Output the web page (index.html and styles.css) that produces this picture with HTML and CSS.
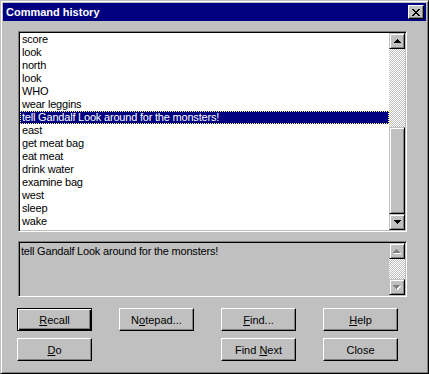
FILE: index.html
```html
<!doctype html>
<html lang="en">
  <head>
    <meta charset="UTF-8" />
    <title>Command history</title>
    <link rel="stylesheet" href="styles.css">
  </head>
  <body>
    <div class="window">
      <div class="titlebar">
        <span class="title">Command history</span>
        <div class="close-btn">
          <svg width="8" height="7" viewBox="0 0 8 7">
            <path d="M0 0h2v1H0zM6 0h2v1H6zM1 1h2v1H1zM5 1h2v1H5zM2 2h4v1H2zM3 3h2v1H3zM2 4h4v1H2zM1 5h2v1H1zM5 5h2v1H5zM0 6h2v1H0zM6 6h2v1H6z" fill="#000" />
          </svg>
        </div>
      </div>
      <div class="client">
        <div class="listbox">
          <ul class="items">
            <li>score</li>
            <li>look</li>
            <li>north</li>
            <li>look</li>
            <li>WHO</li>
            <li>wear leggins</li>
            <li class="selected">tell Gandalf Look around for the monsters!</li>
            <li>east</li>
            <li>get meat bag</li>
            <li>eat meat</li>
            <li>drink water</li>
            <li>examine bag</li>
            <li>west</li>
            <li>sleep</li>
            <li>wake</li>
          </ul>
          <div class="vscroll">
            <div class="sb-btn">
              <svg width="7" height="4" viewBox="0 0 7 4"><path d="M3 0h1v1h1v1h1v1h1v1H0V3h1V2h1V1h1z" fill="#000" /></svg>
            </div>
            <div class="sb-track list-track"></div>
            <div class="sb-thumb"></div>
            <div class="sb-btn">
              <svg width="7" height="4" viewBox="0 0 7 4"><path d="M0 0h7v1H6v1H5v1H4v1H3V3H2V2H1V1H0z" fill="#000" /></svg>
            </div>
          </div>
        </div>

        <div class="editbox">
          <div class="edit-text">tell Gandalf Look around for the monsters!</div>
          <div class="vscroll">
            <div class="sb-btn">
              <svg width="8" height="5" viewBox="0 0 8 5">
                <path d="M4 1h1v1h1v1h1v1h1v1H1V4h1V3h1V2h1z" fill="#fff" />
                <path d="M3 0h1v1h1v1h1v1h1v1H0V3h1V2h1V1h1z" fill="#808080" />
              </svg>
            </div>
            <div class="sb-track grow"></div>
            <div class="sb-btn">
              <svg width="8" height="5" viewBox="0 0 8 5">
                <path d="M1 1h7v1H7v1H6v1H5v1H4V4H3V3H2V2H1z" fill="#fff" />
                <path d="M0 0h7v1H6v1H5v1H4v1H3V3H2V2H1V1H0z" fill="#808080" />
              </svg>
            </div>
          </div>
        </div>

        <div class="buttons">
          <button class="btn default"><u>R</u>ecall</button>
          <button class="btn">N<u>o</u>tepad...</button>
          <button class="btn"><u>F</u>ind...</button>
          <button class="btn"><u>H</u>elp</button>
          <button class="btn col-1"><u>D</u>o</button>
          <button class="btn col-3">Find <u>N</u>ext</button>
          <button class="btn col-4">Close</button>
        </div>
      </div>
    </div>
  </body>
</html>
```

FILE: styles.css
```css
html,
body {
  margin: 0;
  background: #c0c0c0;
}
body {
  font-family: 'Liberation Sans', Arial, sans-serif;
  font-size: 11px;
  color: #000;
}
.window {
  box-sizing: border-box;
  width: 429px;
  height: 374px;
  padding: 2px;
  background: #c0c0c0;
  border: 1px solid;
  border-color: #c0c0c0 #000 #000 #c0c0c0;
  box-shadow: inset 1px 1px #fff, inset -1px -1px #808080;
  display: flex;
  flex-direction: column;
}
.titlebar {
  height: 18px;
  background: #000080;
  display: flex;
  align-items: center;
  justify-content: space-between;
  padding: 0 2px 0 3px;
}
.title {
  color: #fff;
  font-weight: bold;
  font-size: 11px;
}
.close-btn {
  box-sizing: border-box;
  width: 16px;
  height: 14px;
  background: #c0c0c0;
  border: 1px solid;
  border-color: #fff #000 #000 #fff;
  box-shadow: inset -1px -1px #808080;
  display: flex;
  align-items: center;
  justify-content: center;
}
.close-btn svg {
  display: block;
  margin: 0 1px 0 0;
}
.client {
  padding: 10px 19px 0 15px;
}

/* sunken boxes */
.listbox,
.editbox {
  box-sizing: border-box;
  width: 389px;
  padding: 1px;
  border: 1px solid;
  border-color: #808080 #fff #fff #808080;
  box-shadow: inset 1px 1px #000, inset -1px -1px #c0c0c0;
  display: flex;
  letter-spacing: -0.2px;
}
.listbox {
  height: 201px;
  background: #fff;
}
.editbox {
  height: 56px;
  margin-top: 9px;
  background: #c0c0c0;
}
.items {
  list-style: none;
  margin: 0;
  padding: 0;
  flex: 1;
}
.items li {
  height: 13px;
  line-height: 13px;
  padding-left: 2px;
  white-space: nowrap;
}
.items li.selected {
  background: #000080;
  color: #fff;
  outline: 1px dotted #ffff80;
  outline-offset: -1px;
}
.edit-text {
  flex: 1;
  padding: 2px 1px;
  line-height: 13px;
}

/* scrollbars */
.vscroll {
  width: 16px;
  display: flex;
  flex-direction: column;
}
.sb-btn,
.sb-thumb {
  box-sizing: border-box;
  background: #c0c0c0;
  border: 1px solid;
  border-color: #c0c0c0 #000 #000 #c0c0c0;
  box-shadow: inset 1px 1px #fff, inset -1px -1px #808080;
}
.sb-btn {
  height: 16px;
  display: flex;
  align-items: center;
  justify-content: center;
}
.sb-btn svg {
  display: block;
}
.sb-thumb {
  flex: 1;
}
.sb-track {
  background: repeating-conic-gradient(#c0c0c0 0 25%, #fff 0 50%) 0 0 / 2px 2px;
}
.list-track {
  height: 78px;
}
.grow {
  flex: 1;
}

/* push buttons */
.buttons {
  margin: 11px 0 0 -1px;
  display: grid;
  grid-template-columns: repeat(4, 75px);
  grid-auto-rows: 23px;
  column-gap: 27px;
  row-gap: 7px;
}
.btn {
  box-sizing: border-box;
  margin: 0;
  padding: 0;
  font-family: 'Liberation Sans', Arial, sans-serif;
  font-size: 11px;
  color: #000;
  background: #c0c0c0;
  border: 1px solid;
  border-color: #fff #000 #000 #fff;
  box-shadow: inset -1px -1px #808080;
  border-radius: 0;
}
.btn.default {
  border-color: #000;
  box-shadow: inset 1px 1px #fff, inset -1px -1px #000, inset -2px -2px #808080;
}
.col-1 {
  grid-column: 1;
}
.col-3 {
  grid-column: 3;
}
.col-4 {
  grid-column: 4;
}
```
